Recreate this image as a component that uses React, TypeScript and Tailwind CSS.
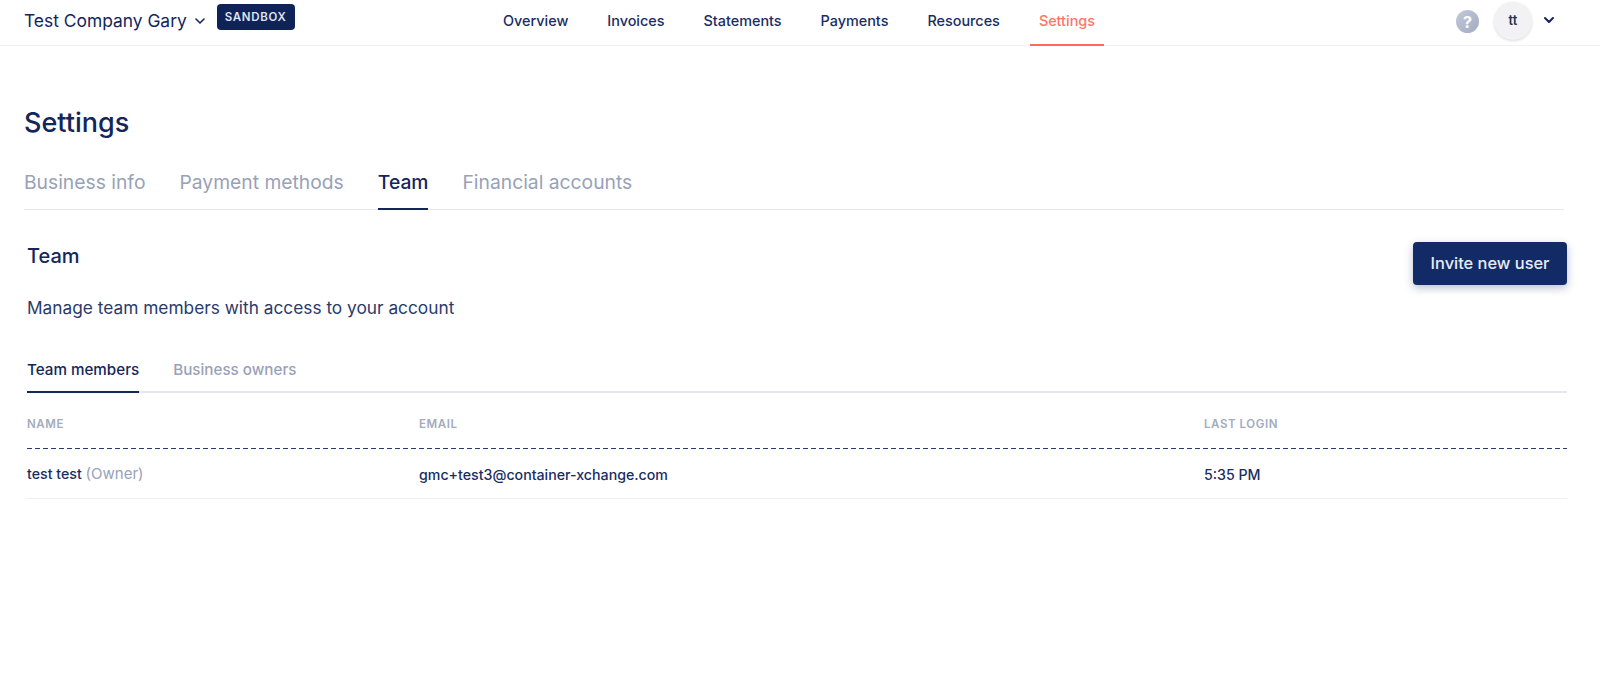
import type { ReactNode } from 'react'
import { ChevronDown } from 'lucide-react'

const navItems = ['Overview', 'Invoices', 'Statements', 'Payments', 'Resources']

function Header() {
  return (
    <header className="flex h-[46px] items-stretch border-b border-[#f0f0f2] pl-[24px] pr-[43px]">
      <div className="flex w-[479px] items-start">
        <div className="mt-[9px] flex items-center gap-[5px] text-[17.4px] leading-[24px] text-[#12265c]">
          <span>Test Company Gary</span>
          <ChevronDown className="h-[16px] w-[16px]" strokeWidth={2.4} />
        </div>
        <span className="ml-[9px] mt-[4px] rounded-[4px] bg-[#0f2359] px-[8px] py-[5px] text-[11.5px] font-semibold leading-[16px] tracking-[0.06em] text-[#dfe3ee]">
          SANDBOX
        </span>
      </div>
      <nav className="flex flex-1 items-stretch text-[14.4px] font-medium text-[#1a2d63]">
        {navItems.map((item) => (
          <span key={item} className="mr-[39px] pt-[12px] leading-[18px]">
            {item}
          </span>
        ))}
        <span className="-ml-[9px] -mb-px border-b-2 border-[#ff6b5e] px-[9px] pt-[12px] leading-[18px] text-[#ff7468]">
          Settings
        </span>
      </nav>
      <div className="flex items-start">
        <span className="mt-[10px] flex h-[23px] w-[23px] items-center justify-center rounded-full bg-gradient-to-br from-[#c4c9da] to-[#a3abc3] text-[16px] font-bold leading-none text-white">
          ?
        </span>
        <span className="ml-[15px] mt-[2px] flex h-[38px] w-[38px] items-center justify-center rounded-full bg-[#f2f2f4] text-[13px] font-semibold text-[#2b3350] shadow-[0_1px_3px_rgba(0,0,0,0.15)]">
          tt
        </span>
        <ChevronDown className="ml-[9px] mt-[12px] h-[16px] w-[16px] text-[#12265c]" strokeWidth={3} />
      </div>
    </header>
  )
}

function TableRow({ name, email, login }: { name: ReactNode; email: string; login: string }) {
  return (
    <div className="flex h-[50px] items-center border-b border-[#eeeff2] pt-[2px] text-[14.2px] font-medium text-[#1a2d63]">
      <div className="w-[392px]">{name}</div>
      <div className="w-[785px]">{email}</div>
      <div>{login}</div>
    </div>
  )
}

export default function App() {
  return (
    <div className="min-h-[674px] bg-white font-['Inter',sans-serif]">
      <Header />
      <main className="pl-[24px] pr-[33px] pt-[58px]">
        <h1 className="text-[27px] font-medium leading-[38px] text-[#12265c]">Settings</h1>

        <div className="mr-[3px] mt-[27px] flex gap-[34px] border-b border-[#e6e8ee] text-[19.3px] leading-[26px] text-[#98a1b8]">
          <span className="pb-[13px]">Business info</span>
          <span className="pb-[13px]">Payment methods</span>
          <span className="-mb-px border-b-2 border-[#12265c] pb-[13px] font-medium text-[#12265c]">Team</span>
          <span className="pb-[13px]">Financial accounts</span>
        </div>

        <div className="ml-[3px]">
          <div className="flex items-start justify-between">
            <div>
              <h2 className="mt-[33px] text-[20px] font-medium leading-[26px] text-[#12265c]">Team</h2>
              <p className="mt-[27px] text-[17.3px] leading-[24px] text-[#2a3a6b]">
                Manage team members with access to your account
              </p>
            </div>
            <button className="mt-[32px] h-[43px] w-[154px] rounded-[4px] bg-[#122b66] text-[16.4px] font-medium text-[#e8ebf3] shadow-[0_3px_8px_rgba(18,43,102,0.3)]">
              Invite new user
            </button>
          </div>

          <div className="mt-[40px] flex gap-[34px] border-b-2 border-[#e6e8ee] text-[15.2px] leading-[20px] text-[#98a1b8]">
            <span className="-mb-[2px] border-b-2 border-[#12265c] pb-[11px] font-medium text-[#12265c]">Team members</span>
            <span className="pb-[11px] font-medium">Business owners</span>
          </div>

          <div className="flex h-[55px] items-center pt-[8px] text-[11.5px] font-semibold tracking-[0.05em] text-[#a3abc0]">
            <div className="w-[392px]">NAME</div>
            <div className="w-[785px]">EMAIL</div>
            <div>LAST LOGIN</div>
          </div>
          <div className="h-px bg-[repeating-linear-gradient(90deg,#2a3c73_0,#2a3c73_5px,transparent_5px,transparent_8px)]" />

          <TableRow
            name={
              <>
                test test <span className="text-[15px] font-normal text-[#98a1b8]">(Owner)</span>
              </>
            }
            email="gmc+test3@container-xchange.com"
            login="5:35 PM"
          />
        </div>
      </main>
    </div>
  )
}
